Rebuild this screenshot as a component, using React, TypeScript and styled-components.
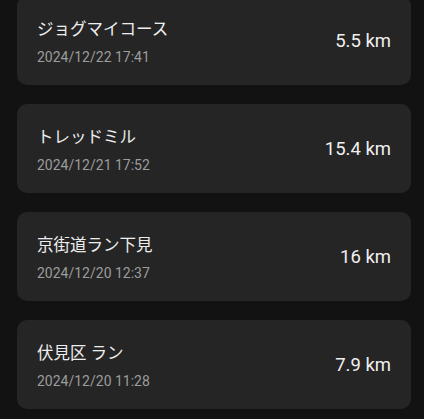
import React from "react";
import styled, { createGlobalStyle } from "styled-components";

const Global = createGlobalStyle`
  html, body {
    margin: 0;
    padding: 0;
    background: #121212;
    overflow: hidden;
  }
  body {
    font-family: Roboto, "Noto Sans CJK JP", sans-serif;
  }
`;

const List = styled.div`
  display: flex;
  flex-direction: column;
  gap: 19px;
  margin-top: -4px;
  padding: 0 13px 0 17px;
`;

const Card = styled.div`
  box-sizing: border-box;
  height: 89px;
  background: #252525;
  border-radius: 10px;
  padding: 0 20px;
  display: flex;
  align-items: center;
  justify-content: space-between;
`;

const Info = styled.div`
  display: flex;
  flex-direction: column;
  gap: 5px;
  padding-top: 3px;
`;

const Title = styled.div`
  font-size: 16.5px;
  line-height: 24px;
  color: #ededed;
  font-weight: 400;
`;

const DateText = styled.div`
  font-size: 14px;
  line-height: 20px;
  color: #9c9c9c;
`;

const Distance = styled.div`
  font-size: 18.5px;
  line-height: 24px;
  color: #f0f0f0;
`;

const runs = [
  { title: "ジョグマイコース", date: "2024/12/22 17:41", km: "5.5 km" },
  { title: "トレッドミル", date: "2024/12/21 17:52", km: "15.4 km" },
  { title: "京街道ラン下見", date: "2024/12/20 12:37", km: "16 km" },
  { title: "伏見区 ラン", date: "2024/12/20 11:28", km: "7.9 km" },
];

export default function App() {
  return (
    <>
      <Global />
      <List>
        {runs.map((r) => (
          <Card key={r.date + r.title}>
            <Info>
              <Title>{r.title}</Title>
              <DateText>{r.date}</DateText>
            </Info>
            <Distance>{r.km}</Distance>
          </Card>
        ))}
      </List>
    </>
  );
}
